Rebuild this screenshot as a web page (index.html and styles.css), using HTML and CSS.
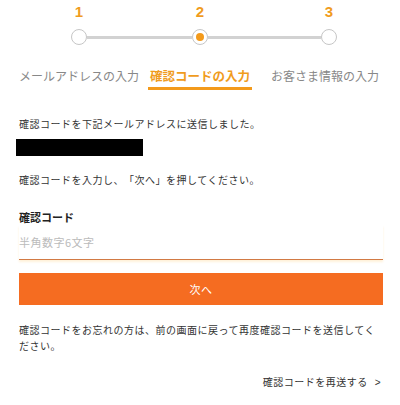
FILE: index.html
```html
<!DOCTYPE html>
<html lang="ja">
<head>
<meta charset="utf-8">
<title>確認コードの入力</title>
<link rel="stylesheet" href="styles.css">
</head>
<body>
<div class="steps">
  <div class="step">
    <div class="num">1</div>
    <div class="track"><span class="seg"></span><span class="dot"></span><span class="seg"></span></div>
    <div class="label">メールアドレスの入力</div>
  </div>
  <div class="step">
    <div class="num">2</div>
    <div class="track"><span class="seg"></span><span class="dot active"><span class="core"></span></span><span class="seg"></span></div>
    <div class="label active">確認コードの入力</div>
  </div>
  <div class="step">
    <div class="num">3</div>
    <div class="track"><span class="seg"></span><span class="dot"></span><span class="seg"></span></div>
    <div class="label">お客さま情報の入力</div>
  </div>
</div>
<div class="content">
  <p class="msg">確認コードを下記メールアドレスに送信しました。</p>
  <div class="mask"></div>
  <p class="msg msg2">確認コードを入力し、「次へ」を押してください。</p>
  <label class="field-label" for="code">確認コード</label>
  <input class="field" id="code" type="text" placeholder="半角数字6文字">
  <button class="btn" type="button">次へ</button>
  <p class="note">確認コードをお忘れの方は、前の画面に戻って再度確認コードを送信してください。</p>
  <div class="resend">確認コードを再送する<span class="arrow">&gt;</span></div>
</div>
</body>
</html>
```
FILE: styles.css
```css
* { box-sizing: border-box; }
body {
  margin: 0;
  background: #fff;
  font-family: "Noto Sans CJK JP", "Noto Sans", sans-serif;
  color: #333;
  text-spacing-trim: space-all;
}
.steps {
  display: grid;
  grid-template-columns: 126px 116px 142px;
  padding: 3px 0 0 16px;
}
.step {
  display: flex;
  flex-direction: column;
  align-items: center;
}
.num {
  font-family: "Liberation Sans", Arial, sans-serif;
  font-weight: bold;
  font-size: 15px;
  line-height: 18px;
  color: #f09c1e;
}
.track {
  display: flex;
  align-items: center;
  width: 100%;
  height: 16px;
  margin-top: 8px;
}
.seg {
  flex: 1;
  height: 3px;
  background: #d2d2d2;
}
.step:first-child .seg:first-child,
.step:last-child .seg:last-child { visibility: hidden; }
.dot {
  flex: none;
  width: 16px;
  height: 16px;
  border: 1.5px solid #c6c6c6;
  border-radius: 50%;
  background: #fff;
  display: flex;
  align-items: center;
  justify-content: center;
}
.core {
  width: 8px;
  height: 8px;
  border-radius: 50%;
  background: #f39a1b;
}
.label {
  margin-top: 22px;
  font-size: 12px;
  line-height: 18px;
  color: #888;
  white-space: nowrap;
  padding: 0 2px 2px;
  border-bottom: 3px solid transparent;
}
.step:last-child .label { margin-right: 8px; }
.label.active {
  color: #f09c1e;
  font-weight: bold;
  font-size: 12.5px;
  border-bottom-color: #f39a1b;
}
.content {
  padding: 26px 17px 0 19px;
  font-size: 10px;
  line-height: 16px;
  letter-spacing: 0.5px;
}
.msg { margin: 0; }
.mask {
  width: 127px;
  height: 17px;
  background: #000;
  margin: 7px 0 0 -3px;
}
.msg2 { margin-top: 16px; }
.field-label {
  display: block;
  margin-top: 21px;
  font-size: 11px;
  font-weight: bold;
  letter-spacing: 0;
  color: #222;
}
.field {
  display: block;
  width: 100%;
  border: none;
  border-bottom: 1.5px solid #d27a44;
  outline: none;
  padding: 9px 0;
  font-family: inherit;
  font-size: 11px;
  line-height: 16px;
  height: 35px;
  letter-spacing: 0.5px;
  background: #fff;
  box-shadow: 0 2px 2px rgba(255, 214, 150, 0.35);
}
.field::placeholder { color: #bbb; }
.btn {
  display: block;
  width: 100%;
  height: 32px;
  margin-top: 13px;
  border: none;
  background: #f56c21;
  color: #fff;
  font-family: inherit;
  font-size: 11px;
  letter-spacing: 0.5px;
}
.note { margin: 17px 0 0; }
.resend {
  margin-top: 20px;
  text-align: right;
  padding-right: 2px;
}
.arrow {
  margin-left: 7px;
  font-family: "Liberation Sans", Arial, sans-serif;
}
```
